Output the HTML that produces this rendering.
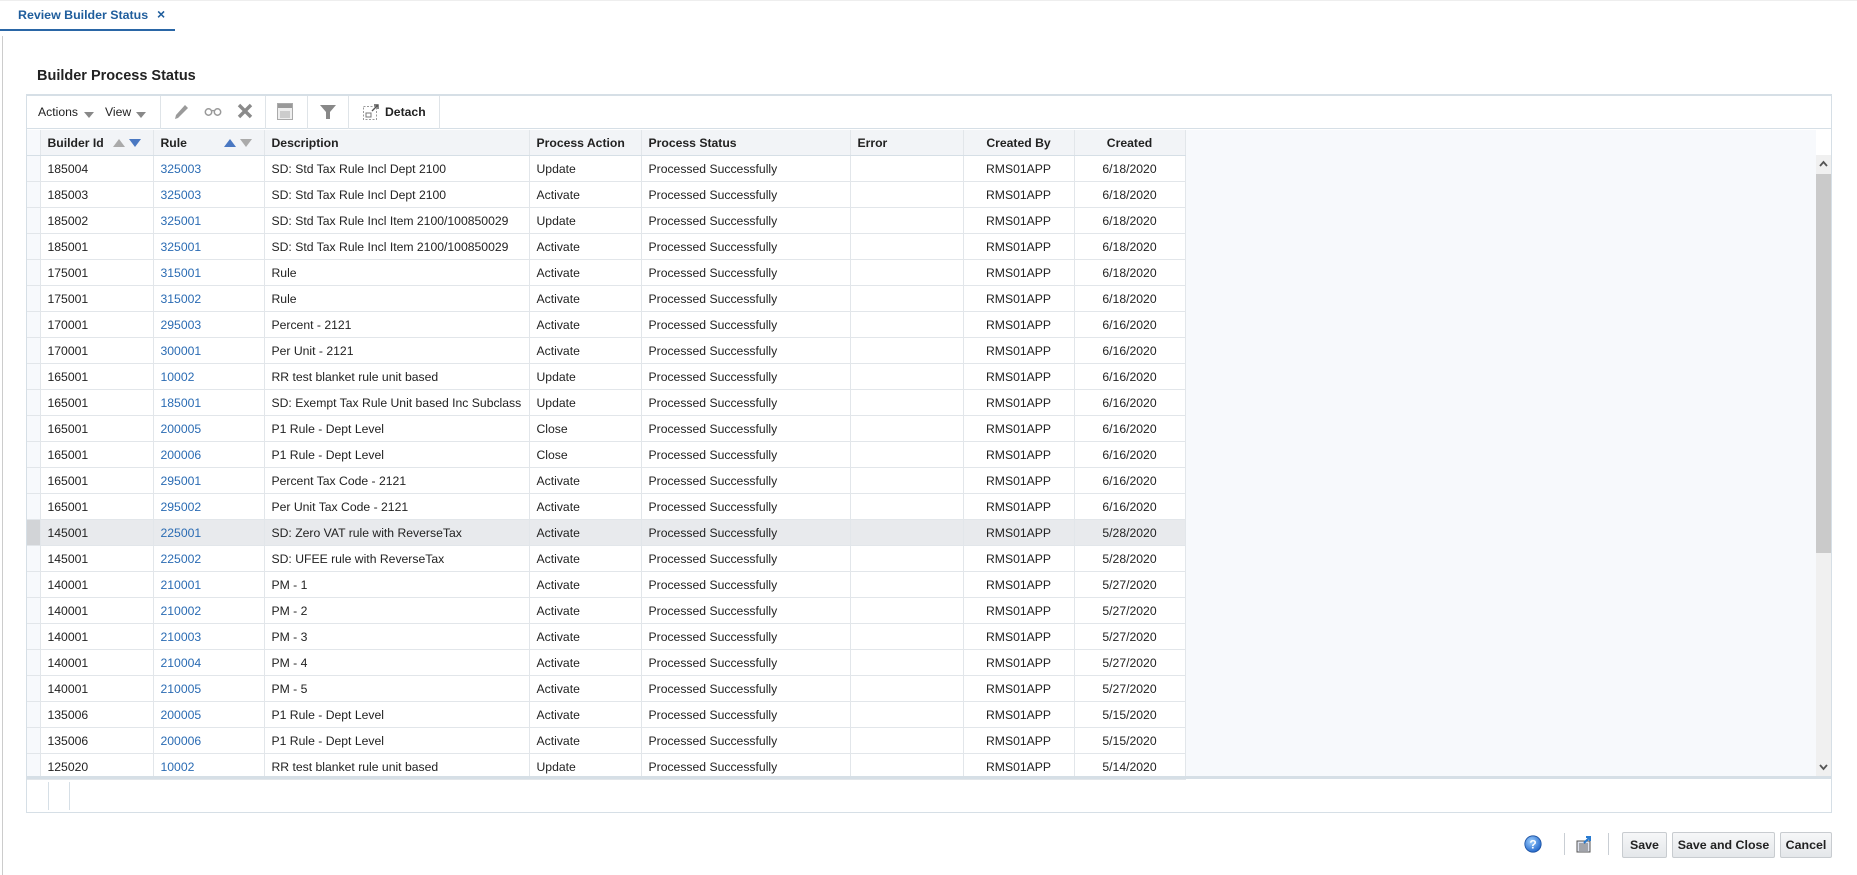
<!DOCTYPE html>
<html><head><meta charset="utf-8"><style>
*{margin:0;padding:0;box-sizing:border-box}
body{width:1857px;height:875px;background:#fff;font-family:"Liberation Sans",Arial,sans-serif;font-size:12.2px;color:#000;position:relative;overflow:hidden}
.abs{position:absolute}
#topline{left:0;top:0;width:1857px;height:1px;background:#eee}
#lline{left:2px;top:36px;width:1px;height:839px;background:#ccc}
#tab{left:18px;top:8px;color:#1f5d9c;font-size:12.4px;font-weight:bold}
#tabx{left:157px;top:6px;color:#1f5d9c;font-size:14px;font-weight:bold}
#tabul{left:0;top:29px;width:175px;height:2px;background:#2a66a6}
#title{left:37px;top:68px;font-size:14.5px;font-weight:bold;color:#222}
#panel{left:26px;top:94px;width:1806px;height:719px;border:1px solid #d6dfe6;border-top:2px solid #d6dfe6;background:#fff}
#tb{left:27px;top:96px;height:33px;width:1804px;border-bottom:1px solid #d6dfe6}
.tbt{top:105px;font-size:12.2px;color:#222}
.tri{top:112px;width:0;height:0;border-left:5px solid transparent;border-right:5px solid transparent;border-top:6px solid #888}
.vd{top:96px;width:1px;height:33px;background:#dfe4e8}
#grid{left:27px;top:130px;width:1789px;height:647px;background:#f7f9fc}
table{position:absolute;left:27px;top:130px;border-collapse:collapse;table-layout:fixed;width:1158px}
th,td{height:26px;border-right:1px solid #e2e6ea;border-bottom:1px solid #e2e6ea;padding:2px 0 0 7px;white-space:nowrap;overflow:hidden;text-overflow:ellipsis;text-align:left}
th{background:#f2f4f7;font-weight:bold;color:#222;border-bottom:1px solid #d6dfe6;height:25px}
td{background:#fff;color:#222}
td.s,th.s{background:#f7f9fc;padding:0}
td.r{color:#2a6bb3}
.c{text-align:center;padding-left:0}
tr.sel td{background:#e8eaed}
tr.sel td.s{background:#d2d4d7}
.up{display:inline-block;width:0;height:0;border-left:6px solid transparent;border-right:6px solid transparent;border-bottom:8px solid}
.dn{display:inline-block;width:0;height:0;border-left:6px solid transparent;border-right:6px solid transparent;border-top:8px solid}
#sb{left:1816px;top:155px;width:15px;height:622px;background:#f0f0f0}
#thumb{left:1816px;top:174px;width:15px;height:379px;background:#cacaca}
#dbot{left:27px;top:776px;width:1804px;height:3px;background:#d6dfe6}
.fd{top:782px;width:1px;height:28px;background:#d6dfe6}
.btn{top:832px;height:26px;border:1px solid #c8ccd0;border-radius:2px;background:linear-gradient(#f6f7f8,#e4e7ea);font-weight:bold;font-size:12.4px;color:#222;text-align:center;line-height:24px}
.bs{top:833px;width:1px;height:22px;background:#c9ced4}
</style></head><body>
<div class="abs" id="topline"></div>
<div class="abs" id="lline"></div>
<div class="abs" id="tab">Review Builder Status</div>
<div class="abs" id="tabx">×</div>
<div class="abs" id="tabul"></div>
<div class="abs" id="title">Builder Process Status</div>
<div class="abs" id="panel"></div>
<div class="abs" id="tb"></div>
<div class="abs tbt" style="left:38px">Actions</div>
<div class="abs tri" style="left:84px"></div>
<div class="abs tbt" style="left:105px">View</div>
<div class="abs tri" style="left:136px"></div>
<div class="abs vd" style="left:160px"></div>
<svg class="abs" style="left:173px;top:103px" width="16" height="18" viewBox="0 0 16 18"><path d="M2 16 L3 12 L12 2 L15 5 L5 15 Z" fill="#9a9a9a"/></svg>
<svg class="abs" style="left:204px;top:108px" width="18" height="8" viewBox="0 0 18 8"><circle cx="4.5" cy="4" r="3.2" fill="none" stroke="#999" stroke-width="1.5"/><circle cx="13.5" cy="4" r="3.2" fill="none" stroke="#999" stroke-width="1.5"/><path d="M7.7 3 Q9 2 10.3 3" stroke="#999" fill="none" stroke-width="1.3"/></svg>
<svg class="abs" style="left:237px;top:103px" width="16" height="16" viewBox="0 0 16 16"><path d="M2 2 L14 14 M14 2 L2 14" stroke="#8a8a8a" stroke-width="3.4"/></svg>
<div class="abs vd" style="left:265px"></div>
<svg class="abs" style="left:277px;top:103px" width="16" height="17" viewBox="0 0 16 17"><rect x="0.5" y="0.5" width="15" height="16" fill="#eee" stroke="#aaa"/><rect x="1" y="1" width="14" height="4" fill="#999"/><path d="M4 8v7M6 8v7M8 8v7M10 8v7M12 8v7" stroke="#aaa"/></svg>
<div class="abs vd" style="left:307px"></div>
<svg class="abs" style="left:320px;top:104px" width="16" height="16" viewBox="0 0 16 16"><path d="M0 1 H16 L10 8 V15 H6 V8 Z" fill="#888"/></svg>
<div class="abs vd" style="left:348px"></div>
<svg class="abs" style="left:363px;top:103px" width="17" height="17" viewBox="0 0 17 17"><rect x="0.5" y="3.5" width="13" height="13" fill="none" stroke="#999" stroke-dasharray="2 1.5"/><rect x="3" y="10" width="5" height="4" fill="none" stroke="#777"/><path d="M9 8 L15 2 M11 2 H15 V6" stroke="#555" fill="none" stroke-width="1.4"/></svg>
<div class="abs tbt" style="left:385px;font-weight:bold">Detach</div>
<div class="abs vd" style="left:439px"></div>
<div class="abs" id="grid"></div>
<table>
<colgroup><col style="width:13px"><col style="width:113px"><col style="width:111px"><col style="width:265px"><col style="width:112px"><col style="width:209px"><col style="width:113px"><col style="width:111px"><col style="width:111px"></colgroup>
<tr><th class="s"></th><th>Builder Id<span style="float:right;margin-right:12px"><span class="up" style="color:#aaa;margin-right:4px"></span><span class="dn" style="color:#4a78c2"></span></span></th><th>Rule<span style="float:right;margin-right:12px"><span class="up" style="color:#4a78c2;margin-right:4px"></span><span class="dn" style="color:#aaa"></span></span></th><th>Description</th><th>Process Action</th><th>Process Status</th><th>Error</th><th class="c">Created By</th><th class="c">Created</th></tr>
<tr><td class="s"></td><td>185004</td><td class="r">325003</td><td>SD: Std Tax Rule Incl Dept 2100</td><td>Update</td><td>Processed Successfully</td><td></td><td class="c">RMS01APP</td><td class="c">6/18/2020</td></tr>
<tr><td class="s"></td><td>185003</td><td class="r">325003</td><td>SD: Std Tax Rule Incl Dept 2100</td><td>Activate</td><td>Processed Successfully</td><td></td><td class="c">RMS01APP</td><td class="c">6/18/2020</td></tr>
<tr><td class="s"></td><td>185002</td><td class="r">325001</td><td>SD: Std Tax Rule Incl Item 2100/100850029</td><td>Update</td><td>Processed Successfully</td><td></td><td class="c">RMS01APP</td><td class="c">6/18/2020</td></tr>
<tr><td class="s"></td><td>185001</td><td class="r">325001</td><td>SD: Std Tax Rule Incl Item 2100/100850029</td><td>Activate</td><td>Processed Successfully</td><td></td><td class="c">RMS01APP</td><td class="c">6/18/2020</td></tr>
<tr><td class="s"></td><td>175001</td><td class="r">315001</td><td>Rule</td><td>Activate</td><td>Processed Successfully</td><td></td><td class="c">RMS01APP</td><td class="c">6/18/2020</td></tr>
<tr><td class="s"></td><td>175001</td><td class="r">315002</td><td>Rule</td><td>Activate</td><td>Processed Successfully</td><td></td><td class="c">RMS01APP</td><td class="c">6/18/2020</td></tr>
<tr><td class="s"></td><td>170001</td><td class="r">295003</td><td>Percent - 2121</td><td>Activate</td><td>Processed Successfully</td><td></td><td class="c">RMS01APP</td><td class="c">6/16/2020</td></tr>
<tr><td class="s"></td><td>170001</td><td class="r">300001</td><td>Per Unit - 2121</td><td>Activate</td><td>Processed Successfully</td><td></td><td class="c">RMS01APP</td><td class="c">6/16/2020</td></tr>
<tr><td class="s"></td><td>165001</td><td class="r">10002</td><td>RR test blanket rule unit based</td><td>Update</td><td>Processed Successfully</td><td></td><td class="c">RMS01APP</td><td class="c">6/16/2020</td></tr>
<tr><td class="s"></td><td>165001</td><td class="r">185001</td><td>SD: Exempt Tax Rule Unit based Inc Subclass</td><td>Update</td><td>Processed Successfully</td><td></td><td class="c">RMS01APP</td><td class="c">6/16/2020</td></tr>
<tr><td class="s"></td><td>165001</td><td class="r">200005</td><td>P1 Rule - Dept Level</td><td>Close</td><td>Processed Successfully</td><td></td><td class="c">RMS01APP</td><td class="c">6/16/2020</td></tr>
<tr><td class="s"></td><td>165001</td><td class="r">200006</td><td>P1 Rule - Dept Level</td><td>Close</td><td>Processed Successfully</td><td></td><td class="c">RMS01APP</td><td class="c">6/16/2020</td></tr>
<tr><td class="s"></td><td>165001</td><td class="r">295001</td><td>Percent Tax Code - 2121</td><td>Activate</td><td>Processed Successfully</td><td></td><td class="c">RMS01APP</td><td class="c">6/16/2020</td></tr>
<tr><td class="s"></td><td>165001</td><td class="r">295002</td><td>Per Unit Tax Code - 2121</td><td>Activate</td><td>Processed Successfully</td><td></td><td class="c">RMS01APP</td><td class="c">6/16/2020</td></tr>
<tr class="sel"><td class="s"></td><td>145001</td><td class="r">225001</td><td>SD: Zero VAT rule with ReverseTax</td><td>Activate</td><td>Processed Successfully</td><td></td><td class="c">RMS01APP</td><td class="c">5/28/2020</td></tr>
<tr><td class="s"></td><td>145001</td><td class="r">225002</td><td>SD: UFEE rule with ReverseTax</td><td>Activate</td><td>Processed Successfully</td><td></td><td class="c">RMS01APP</td><td class="c">5/28/2020</td></tr>
<tr><td class="s"></td><td>140001</td><td class="r">210001</td><td>PM - 1</td><td>Activate</td><td>Processed Successfully</td><td></td><td class="c">RMS01APP</td><td class="c">5/27/2020</td></tr>
<tr><td class="s"></td><td>140001</td><td class="r">210002</td><td>PM - 2</td><td>Activate</td><td>Processed Successfully</td><td></td><td class="c">RMS01APP</td><td class="c">5/27/2020</td></tr>
<tr><td class="s"></td><td>140001</td><td class="r">210003</td><td>PM - 3</td><td>Activate</td><td>Processed Successfully</td><td></td><td class="c">RMS01APP</td><td class="c">5/27/2020</td></tr>
<tr><td class="s"></td><td>140001</td><td class="r">210004</td><td>PM - 4</td><td>Activate</td><td>Processed Successfully</td><td></td><td class="c">RMS01APP</td><td class="c">5/27/2020</td></tr>
<tr><td class="s"></td><td>140001</td><td class="r">210005</td><td>PM - 5</td><td>Activate</td><td>Processed Successfully</td><td></td><td class="c">RMS01APP</td><td class="c">5/27/2020</td></tr>
<tr><td class="s"></td><td>135006</td><td class="r">200005</td><td>P1 Rule - Dept Level</td><td>Activate</td><td>Processed Successfully</td><td></td><td class="c">RMS01APP</td><td class="c">5/15/2020</td></tr>
<tr><td class="s"></td><td>135006</td><td class="r">200006</td><td>P1 Rule - Dept Level</td><td>Activate</td><td>Processed Successfully</td><td></td><td class="c">RMS01APP</td><td class="c">5/15/2020</td></tr>
<tr><td class="s"></td><td>125020</td><td class="r">10002</td><td>RR test blanket rule unit based</td><td>Update</td><td>Processed Successfully</td><td></td><td class="c">RMS01APP</td><td class="c">5/14/2020</td></tr>
</table>
<div class="abs" id="sb"></div>
<div class="abs" id="thumb"></div>
<svg class="abs" style="left:1819px;top:160px" width="9" height="7" viewBox="0 0 9 7"><path d="M1 6 L4.5 2 L8 6" stroke="#555" stroke-width="1.8" fill="none"/></svg>
<svg class="abs" style="left:1819px;top:764px" width="9" height="7" viewBox="0 0 9 7"><path d="M1 1 L4.5 5 L8 1" stroke="#555" stroke-width="1.8" fill="none"/></svg>
<div class="abs" id="dbot"></div>
<div class="abs fd" style="left:48px"></div>
<div class="abs fd" style="left:69px"></div>
<svg class="abs" style="left:1524px;top:835px" width="18" height="18" viewBox="0 0 18 18"><defs><radialGradient id="g" cx="40%" cy="35%" r="70%"><stop offset="0" stop-color="#9fd0ff"/><stop offset="1" stop-color="#1c62c8"/></radialGradient></defs><circle cx="9" cy="9" r="8.2" fill="url(#g)" stroke="#1a4f9e" stroke-width=".8"/><text x="9" y="13.5" font-size="12" font-weight="bold" text-anchor="middle" fill="#fff" font-family="Liberation Sans">?</text></svg>
<div class="abs bs" style="left:1564px"></div>
<svg class="abs" style="left:1576px;top:835px" width="17" height="18" viewBox="0 0 17 18"><rect x="1" y="6" width="13" height="11" fill="#dfe3ee" stroke="#555"/><path d="M3 9h9M3 11h9M3 13h9M3 15h9" stroke="#666"/><path d="M8 8 L13 3 M10 2 H14 V6" stroke="#2a7bd0" stroke-width="2" fill="none"/></svg>
<div class="abs bs" style="left:1608px"></div>
<div class="abs btn" style="left:1622px;width:45px">Save</div>
<div class="abs btn" style="left:1672px;width:103px">Save and Close</div>
<div class="abs btn" style="left:1780px;width:52px">Cancel</div>
</body></html>
